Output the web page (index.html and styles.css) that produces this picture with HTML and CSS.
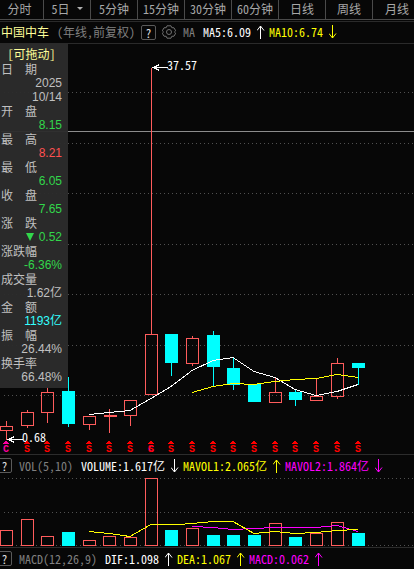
FILE: index.html
```html
<!DOCTYPE html>
<html lang="zh-CN">
<head>
<meta charset="utf-8">
<meta name="viewport" content="width=device-width, initial-scale=1">
<title>中国中车</title>
<link rel="stylesheet" href="styles.css">
</head>
<body>
<svg class="defs" width="0" height="0" aria-hidden="true">
  <defs>
    <symbol id="down" viewBox="0 0 8 14"><path d="M3.500 0v13M0 8.500L3.500 13L7 8.500" /></symbol>
    <symbol id="rise" viewBox="0 0 8 14"><path d="M3.500 14V1M0 5.500L3.500 1L7 5.500" /></symbol>
    <g id="s"><path d="M-3 443h6v-1h-1v-1h-1v-1h-2v1h-1v1h-1z" /><text x="0" y="451">S</text></g>
  </defs>
</svg>
<nav class="tabs">
  <button type="button">分时</button>
  <button type="button">5日<i class="caret"></i></button>
  <button type="button">5分钟</button>
  <button type="button">15分钟</button>
  <button type="button">30分钟</button>
  <button type="button">60分钟</button>
  <button type="button">日线</button>
  <button type="button">周线</button>
  <button type="button">月线</button>
</nav>
<main>
  <header class="bar title">
    <strong class="name">中国中车</strong>
    <span class="dim period">(年线,前复权)</span>
    <button type="button" class="help">?</button>
    <button type="button" class="gear" aria-label="设置"><svg width="14" height="14" viewBox="0 0 14 14"><path d="M5 .8h4l.8 1.900 2.200.1 1.700 3L12.400 7l1.300 1.200-1.700 3-2.200.1L9 13.200H5l-.8-1.900-2.200-.1-1.700-3L1.600 7 .3 5.800l1.700-3 2.200-.1z" /><circle cx="7" cy="7" r="2.500" /></svg></button>
    <span class="dim ma">MA</span>
    <span class="white">MA5:6.09</span><svg class="arrow white"><use href="#rise" /></svg>
    <span class="yellow">MA10:6.74</span><svg class="arrow yellow"><use href="#down" /></svg>
  </header>
  <section class="chart">
    <svg class="plot" viewBox="0 44 414 410">
      <g transform="translate(.5 .5)">
        <path class="grid" d="M1 92H414M1 143H414M1 193H414M1 244H414M1 294H414M1 345H414M1 395H414" />
        <path class="cross" d="M0 131H414" />
        <path class="red" d="M0 426h12v4h-12zM6 420v6M6 430v9M21 412h12v13h-12zM27 409v3M27 425v2M41 392h12v20h-12zM47 386v6M47 412v10M83 416h12v8h-12zM89 424v5M103 415h13M103 416h13M109 408v24M124 400h12v15h-12zM130 415v10M145 334h12v60h-12zM151 67v267M186 338h12v25h-12zM192 335v3M192 363v2M269 392h12v10h-12zM275 376v16M310 396h12v4h-12zM316 378v18M331 363h12v33h-12zM337 357v6M337 396v2" />
        <path class="cyan" d="M68 376v50M171 334v41M213 330v56M233 357v32M254 383v3M295 389v16M358 363v21" />
      </g>
      <path class="fill" d="M62 391h13v33h-13zM165 334h13v29h-13zM207 335h13v32h-13zM227 368h13v17h-13zM248 384h13v18h-13zM289 392h13v8h-13zM352 363h13v5h-13z" />
      <path class="line white" d="M89 414.500L109 412.500L130 410.500L151 398.500L171 386.500L192 370.500L213 360.500L233 357.500L254 371.500L275 377.500L295 389.500L316 395.500L337 391.500L358 384.500" />
      <path class="line yellow" d="M192 392.500L213 386.500L233 383.500L254 384.500L275 381.500L295 379.500L316 378.500L337 374.500L358 377.500" />
      <g class="line white" transform="translate(.5 .5)"><path d="M153 67h14M159 64l-6 3 6 3M8 439h14M14 436l-6 3 6 3" /></g>
      <text class="num" x="167" y="70">37.57</text>
      <text class="num" x="22" y="442">0.68</text>
      <g class="marks">
        <g class="pink"><path d="M3 444h6v-1h-1v-1h-1v-1h-2v1h-1v1h-1z" /><text x="6" y="452">C</text></g>
        <use href="#s" x="27" y="1" /><use href="#s" x="47" y="1" /><use href="#s" x="68" y="1" /><use href="#s" x="89" y="1" /><use href="#s" x="109" y="1" /><use href="#s" x="130" y="1" />
        <g class="pink"><text x="151" y="452">C</text></g>
        <use href="#s" x="151" y="1" /><use href="#s" x="171" y="1" /><use href="#s" x="192" y="1" /><use href="#s" x="213" y="1" /><use href="#s" x="233" y="1" /><use href="#s" x="254" y="1" /><use href="#s" x="275" y="1" /><use href="#s" x="295" y="1" /><use href="#s" x="316" y="1" /><use href="#s" x="337" y="1" /><use href="#s" x="358" y="1" />
      </g>
    </svg>
    <aside class="panel">
      <h2>[可拖动]</h2>
      <dl>
        <dt>日　期</dt><dd>2025</dd><dd>10/14</dd>
        <dt>开　盘</dt><dd class="green">8.15</dd>
        <dt>最　高</dt><dd class="hot">8.21</dd>
        <dt>最　低</dt><dd class="green">6.05</dd>
        <dt>收　盘</dt><dd class="green">7.65</dd>
        <dt>涨　跌</dt><dd class="green"><i class="drop"></i>0.52</dd>
        <dt>涨跌幅</dt><dd class="green">-6.36%</dd>
        <dt>成交量</dt><dd>1.62亿</dd>
        <dt>金　额</dt><dd class="aqua">1193亿</dd>
        <dt>振　幅</dt><dd>26.44%</dd>
        <dt>换手率</dt><dd>66.48%</dd>
      </dl>
    </aside>
  </section>
  <section class="volume">
    <header class="bar">
      <button type="button" class="help">?</button>
      <span class="dim label">VOL(5,10)</span>
      <span class="white">VOLUME:1.617亿</span><svg class="arrow white"><use href="#down" /></svg>
      <span class="yellow">MAVOL1:2.065亿</span><svg class="arrow yellow"><use href="#rise" /></svg>
      <span class="magenta">MAVOL2:1.864亿</span><svg class="arrow magenta"><use href="#down" /></svg>
    </header>
    <svg class="plot" viewBox="0 478 414 69">
      <g transform="translate(.5 .5)">
        <path class="grid" d="M1 478H414M1 512H414M1 545H414" />
        <path class="red" d="M0 530h12v15h-12zM21 519h12v26h-12zM41 536h12v9h-12zM83 540h12v5h-12zM103 536h12v9h-12zM124 537h12v8h-12zM145 478h12v67h-12zM186 528h12v17h-12zM269 523h12v22h-12zM310 533h12v12h-12zM331 522h12v23h-12z" />
      </g>
      <path class="fill" d="M62 532h13v14h-13zM165 530h13v16h-13zM207 535h13v11h-13zM227 535h13v11h-13zM248 535h13v11h-13zM289 537h13v9h-13zM352 533h13v13h-13z" />
      <path class="line magenta" d="M192 526.500L213 527.500L233 529.500L254 528.500L275 527.500L316 527.500L327 526.500L337 525.500L358 531.500" />
      <path class="line yellow" d="M89 531.500L109 533.500L130 536.500L151 524.500H178L192 523.500L213 521.500H233L254 533.500L275 531.500L295 533.500L316 532.500L337 530.500L358 529.500" />
    </svg>
  </section>
  <section class="macd">
    <header class="bar">
      <button type="button" class="help">?</button>
      <span class="dim label">MACD(12,26,9)</span>
      <span class="white">DIF:1.098</span><svg class="arrow white"><use href="#rise" /></svg>
      <span class="yellow">DEA:1.067</span><svg class="arrow yellow"><use href="#rise" /></svg>
      <span class="magenta">MACD:0.062</span><svg class="arrow magenta"><use href="#rise" /></svg>
    </header>
  </section>
</main>
</body>
</html>
```
FILE: styles.css
```css
* { box-sizing: border-box; }
body {
  margin: 0;
  background: #070707;
  color: #c0c0c0;
  font: 12px/14px "Noto Sans CJK SC", sans-serif;
  font-feature-settings: "hwid";
  overflow: hidden;
}
button {
  margin: 0;
  padding: 0;
  border: 0;
  background: none;
  color: inherit;
  font: inherit;
  font-feature-settings: inherit;
}
.defs { position: absolute; }

.tabs {
  display: grid;
  grid-template-columns: 44fr repeat(7, 47fr) 41fr;
  height: 20px;
  border-bottom: 1px solid #4a4a4a;
  color: #a8a8a8;
}
.tabs button {
  display: flex;
  align-items: center;
  justify-content: center;
  gap: 7px;
  min-width: 0;
  padding-bottom: 2px;
  border-right: 1px solid #4a4a4a;
  white-space: nowrap;
}
.tabs button:first-child { padding-right: 4px; }
.tabs button:last-child { justify-content: flex-start; padding-left: 12px; border: 0; }
.caret { border: 3px solid transparent; border-top-color: #b0b0b0; border-bottom: 0; }

.bar {
  display: flex;
  align-items: center;
  height: 23px;
  padding-bottom: 2px;
  white-space: nowrap;
}
.title {
  margin-top: 1px;
  padding: 0 0 1px 1px;
  border: solid #2a2a2a;
  border-width: 1px 0;
}
.name { color: #ffff99; font-weight: 400; }
.period { margin: 0 6px 0 8px; }
.ma { margin-right: 8px; }
.label { margin: 0 8px 0 7px; }
.help {
  width: 15px;
  height: 15px;
  border: 1px solid #5a5a5a;
  border-radius: 2px;
  color: #e0e0e0;
  line-height: 13px;
}
.volume .help, .macd .help { margin-left: -3px; }
.gear { width: 14px; height: 14px; margin: 0 7px 0 6px; }
.gear svg { display: block; fill: none; stroke: #707070; overflow: visible; }
.arrow {
  width: 8px;
  height: 14px;
  margin: 0 4px 0 6px;
  fill: none;
  stroke: currentColor;
}

.dim { color: #808080; }
.white { color: #fff; }
.yellow { color: #ff0; }
.magenta { color: #f0f; }

.plot { display: block; width: 100%; shape-rendering: crispEdges; }
.plot path { fill: none; }
.plot .grid { stroke: #505050; stroke-dasharray: 1 3; stroke-dashoffset: -2.5; }
.plot .cross { stroke: #8c8c8c; }
.plot .red { stroke: #ff5c5c; }
.plot .cyan { stroke: #0ff; }
.plot .fill { fill: #0ff; }
.plot .line { stroke: currentColor; }
.num { fill: #fff; }
.marks { fill: #f00; font: bold 10px "Liberation Mono", monospace; text-anchor: middle; }
.marks .pink { fill: #ff00a0; }
.marks path, #s path { fill: inherit; }

.chart { position: relative; border-bottom: 1px solid #2c2c2c; }
.volume { border-bottom: 1px solid #2c2c2c; }
.panel {
  position: absolute;
  top: 0;
  left: 0;
  width: 68px;
  padding: 3px 6px 4px 1px;
  background: rgba(44, 44, 44, .96);
}
.panel h2 {
  margin: 0 0 1px;
  color: #ffff99;
  font-size: 12px;
  font-weight: 400;
  line-height: 14px;
  text-align: center;
}
.panel dl, .panel dd { margin: 0; }
.panel dt { font-feature-settings: normal; }
.panel dd {
  font-family: "Liberation Sans", "Noto Sans CJK SC", sans-serif;
  line-height: 14px;
  text-align: right;
}
.green { color: #32d74b; }
.hot { color: #ff5050; }
.aqua { color: #3ff; }
.drop {
  display: inline-block;
  margin-right: 5px;
  border: 4px solid transparent;
  border-top: 8px solid #32d74b;
  border-bottom: 0;
}
```
